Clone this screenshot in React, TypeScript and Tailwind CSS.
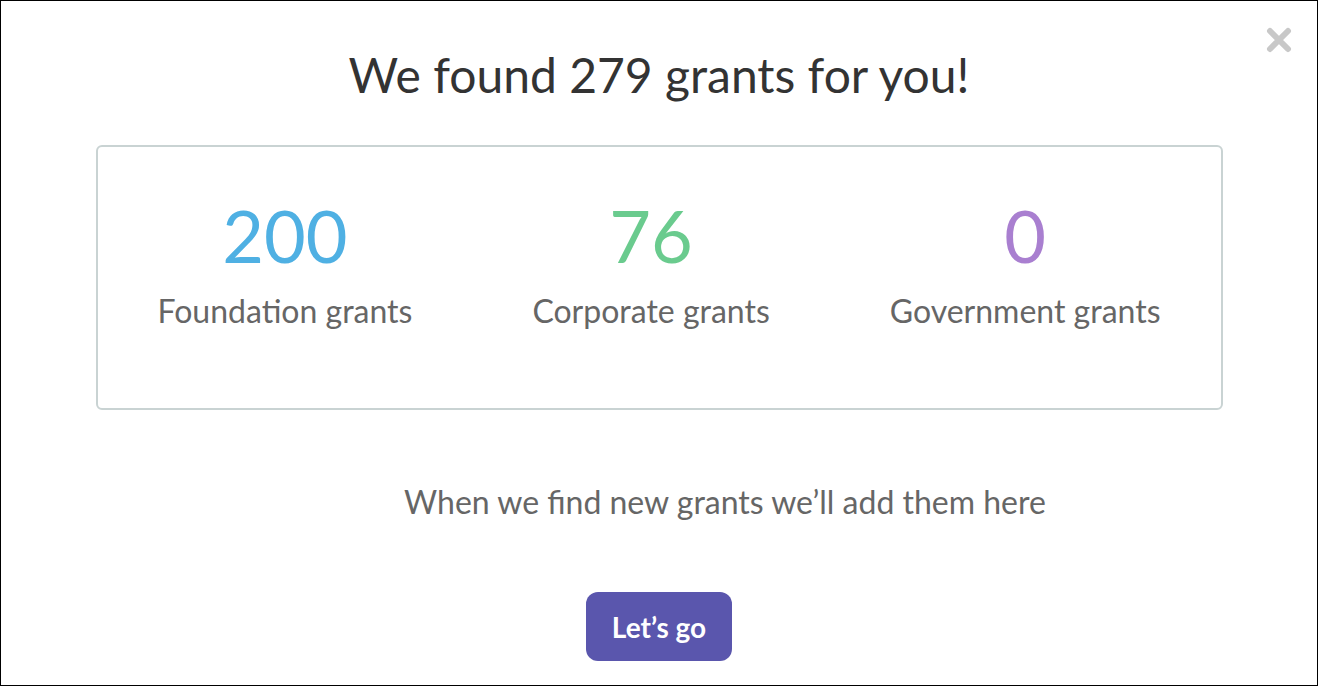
import React from "react";

export default function App() {
  const stats = [
    { n: "200", label: "Foundation grants", color: "text-[#4fb0e3]" },
    { n: "76", label: "Corporate grants", color: "text-[#6acb8e]" },
    { n: "0", label: "Government grants", color: "text-[#a97fd0]" },
  ];
  return (
    <div
      className="relative w-[1318px] h-[686px] border border-black bg-white flex flex-col items-center"
      style={{ fontFamily: "Lato, 'Noto Sans', sans-serif" }}
    >
      <button className="absolute right-[25px] top-[26px] text-[#c8c8c8]" aria-label="close">
        <svg width="26" height="26" viewBox="0 0 26 26">
          <path d="M4 4 L22 22 M22 4 L4 22" stroke="currentColor" strokeWidth="6" strokeLinecap="round" />
        </svg>
      </button>
      <h1 className="mt-[44px] text-[48px] leading-[60px] text-[#333333] font-normal">
        We found 279 grants for you!
      </h1>
      <div className="mt-[40px] w-[1127px] h-[265px] border-2 border-[#c9d3d3] rounded-[6px] flex justify-around pt-[48px]">
        {stats.map((s) => (
          <div key={s.label} className="flex flex-col items-center">
            <div className={`text-[72px] leading-[80px] ${s.color}`}>{s.n}</div>
            <div className="text-[32px] leading-[40px] text-[#666666] mt-[16px]">{s.label}</div>
          </div>
        ))}
      </div>
      <p className="mt-[72px] ml-[132px] text-[32px] leading-[40px] text-[#666666]">
        When we find new grants we’ll add them here
      </p>
      <button className="mt-[70px] w-[146px] h-[69px] rounded-[12px] bg-[#5a56ad] text-white text-[28px] font-bold">
        Let’s go
      </button>
    </div>
  );
}
